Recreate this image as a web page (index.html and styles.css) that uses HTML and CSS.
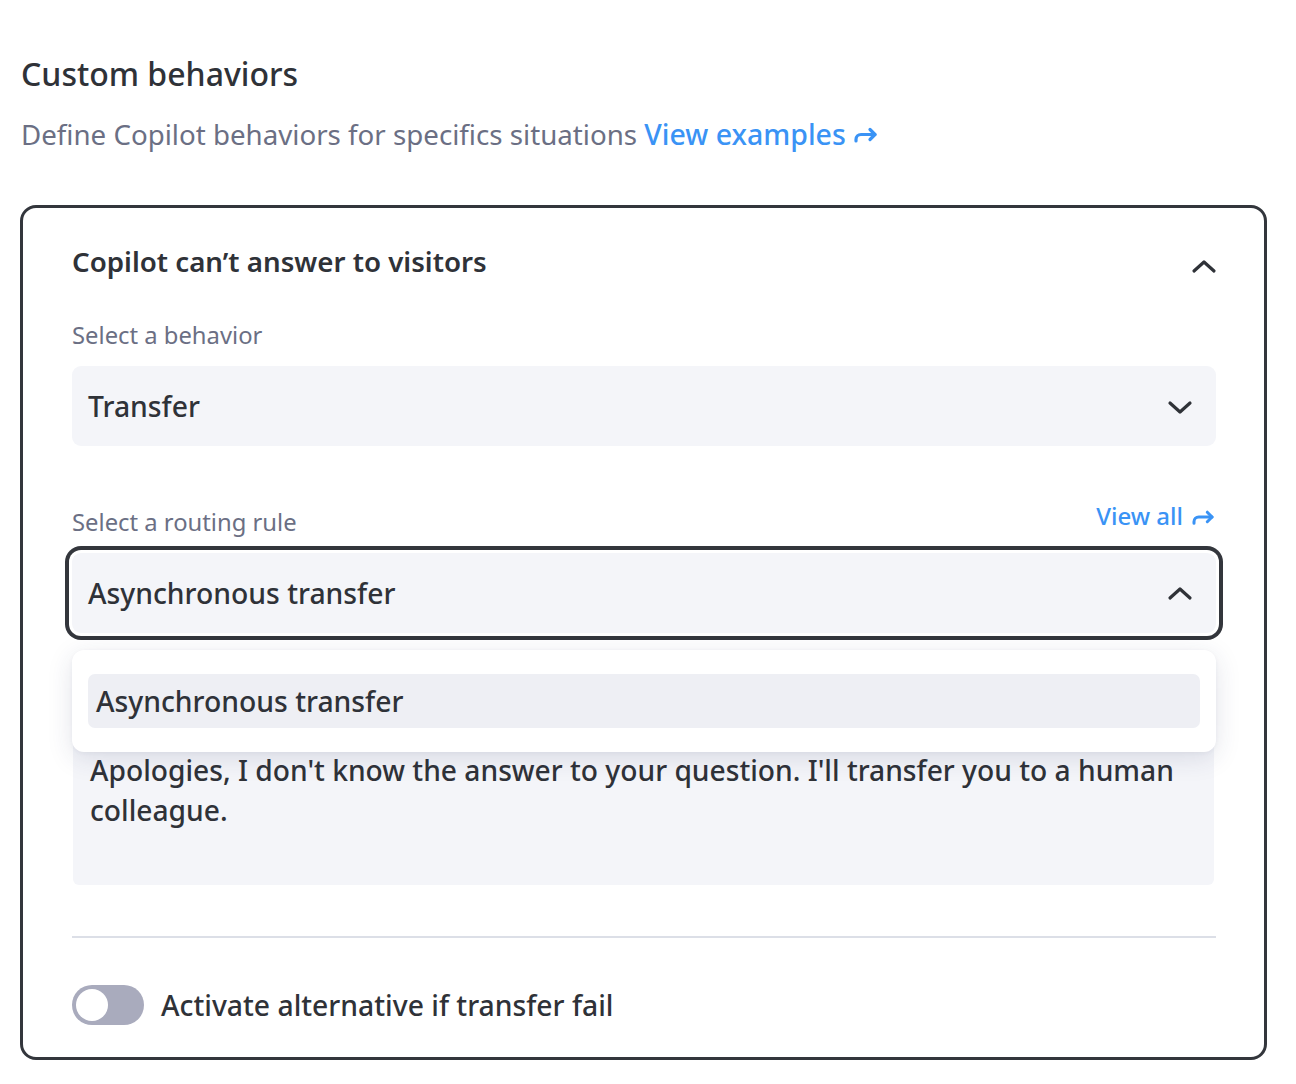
FILE: index.html
```html
<!DOCTYPE html>
<html lang="en">
<head>
<meta charset="utf-8">
<title>Custom behaviors</title>
<link rel="stylesheet" href="styles.css">
</head>
<body>
<div class="page">
  <h1 class="title">Custom behaviors</h1>
  <p class="subtitle">Define Copilot behaviors for specifics situations <a class="link" href="#">View examples<svg class="arrow" viewBox="0 0 26 20" width="26" height="20"><path d="M3 17v-1.5a5 5 0 0 1 5-5h14" fill="none" stroke="currentColor" stroke-width="3.2" stroke-linecap="round" stroke-linejoin="round"/><path d="M17 5.5l5 5-5 5" fill="none" stroke="currentColor" stroke-width="3.2" stroke-linecap="round" stroke-linejoin="round"/></svg></a></p>

  <section class="card">
    <div class="card-head">
      <h2 class="card-title">Copilot can’t answer to visitors</h2>
      <svg class="chev" viewBox="0 0 26 16" width="26" height="16"><path d="M3 13l10-9 10 9" fill="none" stroke="currentColor" stroke-width="3.2" stroke-linecap="round" stroke-linejoin="round"/></svg>
    </div>

    <div class="label label-first">Select a behavior</div>
    <div class="select">
      <span>Transfer</span>
      <svg class="chev" viewBox="0 0 26 16" width="26" height="16"><path d="M3 3l10 9 10-9" fill="none" stroke="currentColor" stroke-width="3.2" stroke-linecap="round" stroke-linejoin="round"/></svg>
    </div>

    <div class="label-row">
      <span class="label">Select a routing rule</span>
      <a class="link link-small" href="#">View all<svg class="arrow" viewBox="0 0 26 20" width="25" height="19"><path d="M3 17v-1.5a5 5 0 0 1 5-5h14" fill="none" stroke="currentColor" stroke-width="3.2" stroke-linecap="round" stroke-linejoin="round"/><path d="M17 5.5l5 5-5 5" fill="none" stroke="currentColor" stroke-width="3.2" stroke-linecap="round" stroke-linejoin="round"/></svg></a>
    </div>
    <div class="select-wrap">
      <div class="select focused">
        <span>Asynchronous transfer</span>
        <svg class="chev" viewBox="0 0 26 16" width="26" height="16"><path d="M3 13l10-9 10 9" fill="none" stroke="currentColor" stroke-width="3.2" stroke-linecap="round" stroke-linejoin="round"/></svg>
      </div>
      <div class="menu">
        <div class="option">Asynchronous transfer</div>
      </div>
    </div>

    <div class="textarea">Apologies, I don't know the answer to your question. I'll transfer you to a human colleague.</div>

    <div class="divider"></div>

    <div class="toggle-row">
      <span class="toggle"><span class="knob"></span></span>
      <span class="toggle-label">Activate alternative if transfer fail</span>
    </div>
  </section>
</div>
</body>
</html>
```

FILE: styles.css
```css
* { box-sizing: border-box; }
html, body { margin: 0; padding: 0; background: #ffffff; }
body {
  font-family: "Noto Sans", "Open Sans", "Liberation Sans", sans-serif;
  color: #2f3238;
}
.page {
  padding: 52px 29px 0 20px;
}
.title {
  margin: 0 0 0 1px;
  font-size: 32px;
  line-height: 44px;
  font-weight: 500;
  color: #2f3238;
}
.subtitle {
  margin: 18px 0 0 1px;
  font-size: 27.7px;
  line-height: 40px;
  color: #6b6f84;
}
.link {
  color: #3a93f5;
  text-decoration: none;
  white-space: nowrap;
  font-weight: 500;
  font-size: 28.5px;
}
.link .arrow {
  margin-left: 7px;
  vertical-align: 1px;
}
.card {
  margin-top: 51px;
  border: 3px solid #33363c;
  border-radius: 16px;
  padding: 34px 48px 32px 49px;
}
.card-head {
  display: flex;
  align-items: center;
  justify-content: space-between;
}
.card-title {
  margin: 0;
  font-size: 27.7px;
  line-height: 38px;
  font-weight: 600;
  color: #2f3238;
}
.card-head .chev {
  color: #2f3238;
  margin-top: 10px;
  margin-right: -1px;
}
.label {
  font-size: 23.8px;
  line-height: 32px;
  color: #6b6f84;
}
.label-first {
  display: block;
  margin-top: 39px;
  margin-bottom: 15px;
}
.select {
  height: 80px;
  background: #f4f5f9;
  border-radius: 9px;
  display: flex;
  align-items: center;
  justify-content: space-between;
  padding: 0 23px 0 16px;
  font-size: 28.3px;
  font-weight: 500;
  color: #2f3238;
}
.select .chev { color: #2f3238; margin-top: 3px; }
.label-row {
  margin-top: 60px;
  margin-bottom: 15px;
  display: flex;
  align-items: flex-start;
  justify-content: space-between;
}
.link-small {
  font-size: 24px;
  line-height: 20px;
  display: flex;
  align-items: center;
}
.link-small .arrow {
  margin-left: 8px;
  vertical-align: 0;
}
.select-wrap {
  position: relative;
}
.select.focused {
  box-shadow: 0 0 0 3px #ffffff, 0 0 0 7px #33363c;
  border-radius: 9px;
}
.select.focused .chev { margin-top: 0; }
.menu {
  position: absolute;
  top: calc(100% + 17px);
  left: 0;
  right: 0;
  background: #ffffff;
  border-radius: 12px;
  padding: 24px 16px;
  box-shadow: 0 6px 26px rgba(40, 50, 90, 0.13), 0 1px 4px rgba(40, 50, 90, 0.05);
  z-index: 2;
}
.option {
  height: 54px;
  background: #eeeff4;
  border-radius: 7px;
  padding: 0 8px;
  display: flex;
  align-items: center;
  font-size: 28.3px;
  font-weight: 500;
  color: #2f3238;
}
.textarea {
  margin: 102px 2px 0 1px;
  min-height: 150px;
  background: #f4f5f9;
  border-radius: 6px;
  padding: 15px 17px;
  font-size: 28.2px;
  font-weight: 500;
  line-height: 40px;
  color: #2f3238;
}
.divider {
  margin-top: 51px;
  height: 2px;
  background: #dcdfe7;
}
.toggle-row {
  margin-top: 47px;
  display: flex;
  align-items: center;
  gap: 17px;
}
.toggle {
  width: 72px;
  height: 40px;
  border-radius: 20px;
  background: #a9abbd;
  padding: 4px;
  display: flex;
  align-items: center;
}
.knob {
  width: 32px;
  height: 32px;
  border-radius: 50%;
  background: #ffffff;
}
.toggle-label {
  font-size: 28.3px;
  font-weight: 500;
  line-height: 40px;
  color: #2f3238;
}
```
